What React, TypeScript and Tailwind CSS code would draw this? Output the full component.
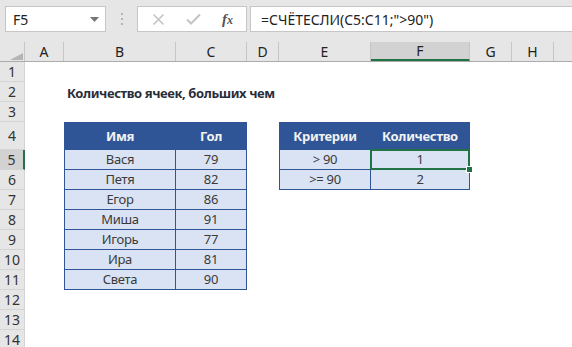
import React from "react";

const colWidths = [39, 112, 71, 32, 92, 99, 42, 42];
const colNames = ["A", "B", "C", "D", "E", "F", "G", "H"];

const people = [
  ["Вася", "79"],
  ["Петя", "82"],
  ["Егор", "86"],
  ["Миша", "91"],
  ["Игорь", "77"],
  ["Ира", "81"],
  ["Света", "90"],
];

const criteria = [
  ["> 90", "1"],
  [">= 90", "2"],
];

type Cell = {
  text?: string;
  kind?: "head" | "body" | "title";
  first?: boolean;
  top?: boolean;
  selected?: boolean;
};

function buildRow(row: number): Record<number, Cell> {
  const cells: Record<number, Cell> = {};
  if (row === 2) cells[1] = { text: "Количество ячеек, больших чем", kind: "title" };
  if (row === 4) {
    cells[1] = { text: "Имя", kind: "head", first: true, top: true };
    cells[2] = { text: "Гол", kind: "head", top: true };
    cells[4] = { text: "Критерии", kind: "head", first: true, top: true };
    cells[5] = { text: "Количество", kind: "head", top: true };
  }
  if (row >= 5 && row <= 11) {
    const [name, goals] = people[row - 5];
    cells[1] = { text: name, kind: "body", first: true };
    cells[2] = { text: goals, kind: "body" };
  }
  if (row === 5 || row === 6) {
    const [crit, count] = criteria[row - 5];
    cells[4] = { text: crit, kind: "body", first: true };
    cells[5] = { text: count, kind: "body", selected: row === 5 };
  }
  return cells;
}

function SheetCell({ width, cell }: { width: number; cell?: Cell }) {
  if (!cell) return <div className="shrink-0" style={{ width }} />;

  if (cell.kind === "title") {
    return (
      <div className="relative shrink-0" style={{ width }}>
        <span className="absolute left-[3px] top-[2px] whitespace-nowrap text-[13px] font-bold tracking-[-0.4px] text-[#2a2d3a]">
          {cell.text}
        </span>
      </div>
    );
  }

  const head = cell.kind === "head";
  return (
    <div
      className={`relative flex shrink-0 items-center justify-center border-b border-r border-[#2f5597] pt-[1px] text-[13px] tracking-[-0.3px] ${
        cell.first ? "border-l" : ""
      } ${cell.top ? "border-t" : ""} ${
        head ? "bg-[#2f5597] font-bold text-[#f2f2f2]" : "bg-[#dae3f3] text-[#3a3a3a]"
      } ${cell.selected ? "z-10" : ""}`}
      style={{ width }}
    >
      {cell.text}
      {cell.selected && (
        <>
          <div className="absolute -left-[1px] -top-[1px] -right-[1px] -bottom-[1px] border-2 border-[#217346]" />
          <div className="absolute -bottom-[4px] -right-[4px] h-[7px] w-[7px] border border-white bg-[#217346]" />
        </>
      )}
    </div>
  );
}

function FormulaBar() {
  return (
    <div className="flex h-[42px] items-start bg-[#e6e6e6] pt-[6px] pl-[5px]">
      <div className="flex h-[26px] w-[101px] items-center justify-between border border-[#c6c6c6] bg-white pl-[7px] pr-[6px] text-[14px] text-[#222]">
        <span>F5</span>
        <svg width="9" height="5" viewBox="0 0 9 5">
          <path d="M0 0h9L4.5 5z" fill="#767676" />
        </svg>
      </div>
      <div className="flex w-[31px] flex-col items-center gap-[3px] pt-[7px]">
        <span className="h-[2px] w-[2px] bg-[#b4b4b4]" />
        <span className="h-[2px] w-[2px] bg-[#b4b4b4]" />
        <span className="h-[2px] w-[2px] bg-[#b4b4b4]" />
      </div>
      <div className="flex h-[26px] w-[110px] items-center border border-[#c6c6c6] bg-white">
        <svg className="ml-[14px]" width="13" height="13" viewBox="0 0 13 13">
          <path d="M1.5 1.5l10 10M11.5 1.5l-10 10" stroke="#c3c3c3" strokeWidth="1.6" />
        </svg>
        <svg className="ml-[21px]" width="15" height="12" viewBox="0 0 15 12">
          <path d="M1 6.5l4 4L14 1.5" stroke="#c3c3c3" strokeWidth="2" fill="none" />
        </svg>
        <span className="ml-[21px] font-['Liberation_Serif',serif] text-[15px] font-bold italic text-[#555]">
          f<span className="text-[12px]">x</span>
        </span>
      </div>
      <div className="ml-[3px] flex h-[26px] flex-1 items-center border-y border-l border-[#c6c6c6] bg-white pl-[10px] text-[14px] text-[#222]">
        =СЧЁТЕСЛИ(C5:C11;"&gt;90")
      </div>
    </div>
  );
}

function ColumnHeaders() {
  return (
    <div className="flex h-[20px] border-b border-[#ababab] bg-[#e6e6e6] text-[14px] text-[#222]">
      <div className="relative w-[25px] shrink-0 border-r border-[#c6c6c6]">
        <svg className="absolute left-[10px] top-[11px]" width="13" height="7" viewBox="0 0 13 7">
          <path d="M13 0v7H0z" fill="#b4b4b4" />
        </svg>
      </div>
      {colNames.map((name, i) => (
        <div
          key={name}
          className={`flex shrink-0 items-center justify-center border-r border-[#c6c6c6] ${
            name === "F" ? "border-b-2 border-b-[#217346] bg-[#d2d2d2]" : ""
          }`}
          style={{ width: colWidths[i] }}
        >
          {name}
        </div>
      ))}
      <div className="flex-1" />
    </div>
  );
}

export default function App() {
  const rows = Array.from({ length: 14 }, (_, i) => i + 1);
  return (
    <div className="h-[347px] w-[572px] overflow-hidden bg-white font-['Noto_Sans',sans-serif]">
      <FormulaBar />
      <ColumnHeaders />
      {rows.map((row) => {
        const cells = buildRow(row);
        const height = row === 4 ? 28 : 20;
        return (
          <div key={row} className="flex" style={{ height }}>
            <div
              className={`flex w-[25px] shrink-0 items-center justify-center border-b border-r border-[#d4d4d4] text-[14px] text-[#333] ${
                row === 5 ? "border-r-2 border-r-[#217346] bg-[#d2d2d2]" : "bg-[#e6e6e6]"
              }`}
            >
              {row}
            </div>
            {colWidths.map((w, i) => (
              <SheetCell key={i} width={w} cell={cells[i]} />
            ))}
          </div>
        );
      })}
    </div>
  );
}
